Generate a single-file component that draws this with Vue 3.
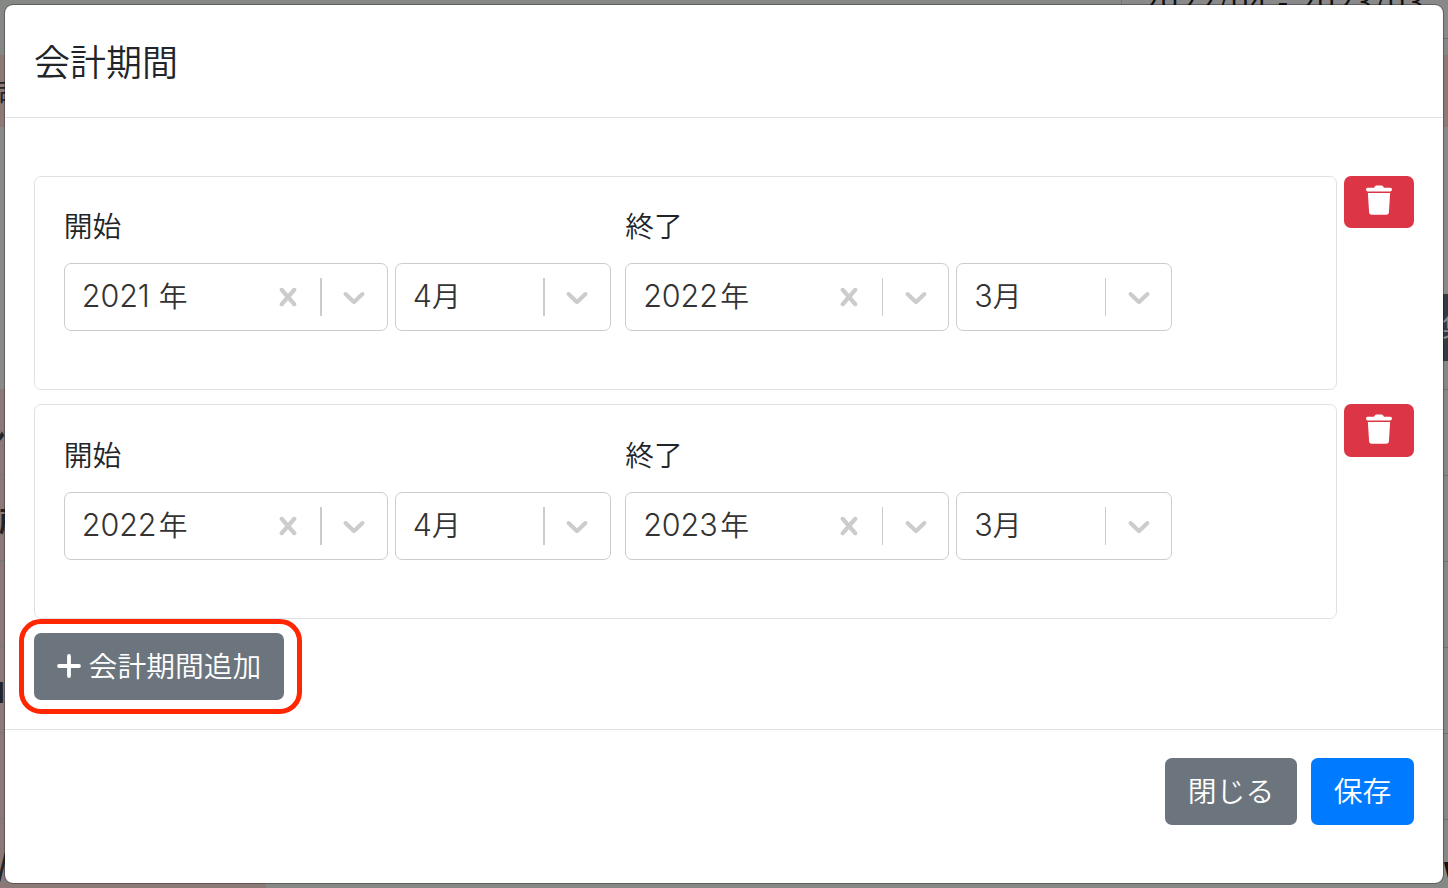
<script setup>
import { ref } from 'vue';

const periods = ref([
  {
    id: 1,
    start: { year: 2021, month: 4 },
    end: { year: 2022, month: 3 },
  },
  {
    id: 2,
    start: { year: 2022, month: 4 },
    end: { year: 2023, month: 3 },
  },
]);

const groups = [
  { key: 'start', label: '開始' },
  { key: 'end', label: '終了' },
];

function addPeriod() {
  const last = periods.value[periods.value.length - 1];
  const year = last ? last.end.year : 2021;

  periods.value.push({
    id: Date.now(),
    start: { year, month: 4 },
    end: { year: year + 1, month: 3 },
  });
}

function removePeriod(id) {
  periods.value = periods.value.filter((p) => p.id !== id);
}
</script>

<template>
  <div class="screen">
    <div class="page" aria-hidden="true">
      <div class="page-picker">2022/04 - 2023/03</div>
      <div class="page-side page-side--left">
        <div class="strip strip--top"></div>
        <div class="strip strip--head"><span class="strip-company">司</span></div>
        <div class="strip strip--blank"></div>
        <div class="strip strip--row"><span class="strip-a">ン</span></div>
        <div class="strip strip--row"><span class="strip-b">所</span></div>
        <div class="strip strip--row"></div>
        <div class="strip strip--row"><span class="strip-c">I</span></div>
        <div class="strip strip--row"></div>
        <div class="strip strip--row"><span class="strip-d">/</span></div>
      </div>
      <div class="page-side page-side--right">
        <div class="strip strip--r-top"></div>
        <div class="strip strip--r-gap"></div>
        <div class="strip strip--head"></div>
        <div class="strip strip--r-blank"></div>
        <div class="strip strip--button"><span>集</span></div>
        <div class="strip strip--r-first"></div>
        <div class="strip strip--gray"></div>
        <div class="strip strip--gray"></div>
        <div class="strip strip--gray"></div>
        <div class="strip strip--gray"></div>
        <div class="strip strip--gray"></div>
        <div class="strip strip--gray"><span class="strip-e">w</span></div>
      </div>
      <div class="page-bottom"></div>
    </div>

    <div class="modal" role="dialog" aria-modal="true">
      <header class="modal-header">
        <h5 class="modal-title">会計期間</h5>
      </header>

      <div class="modal-body">
        <div v-for="period in periods" :key="period.id" class="period">
          <div class="period-card">
            <div v-for="group in groups" :key="group.key" class="group">
              <span class="group-label">{{ group.label }}</span>
              <div class="group-selects">
                <div class="select select--year">
                  <span class="select-value"><span class="digits digits--year">{{ period[group.key].year }}</span>年</span>
                  <span class="select-indicator">
                    <svg viewBox="0 0 20 20">
                      <path d="M14.348 14.849c-0.469 0.469-1.229 0.469-1.697 0l-2.651-3.030-2.651 3.029c-0.469 0.469-1.229 0.469-1.697 0-0.469-0.469-0.469-1.229 0-1.697l2.758-3.15-2.759-3.152c-0.469-0.469-0.469-1.228 0-1.697s1.228-0.469 1.697 0l2.652 3.031 2.651-3.031c0.469-0.469 1.228-0.469 1.697 0s0.469 1.229 0 1.697l-2.758 3.152 2.758 3.15c0.469 0.469 0.469 1.229 0 1.698z" />
                    </svg>
                  </span>
                  <span class="select-separator"></span>
                  <span class="select-indicator">
                    <svg viewBox="0 0 20 20">
                      <path d="M4.516 7.548c0.436-0.446 1.043-0.481 1.576 0l3.908 3.747 3.908-3.747c0.533-0.481 1.141-0.446 1.574 0 0.436 0.445 0.408 1.197 0 1.615-0.406 0.418-4.695 4.502-4.695 4.502-0.217 0.223-0.502 0.335-0.787 0.335s-0.57-0.112-0.789-0.335c0 0-4.287-4.084-4.695-4.502s-0.436-1.17 0-1.615z" />
                    </svg>
                  </span>
                </div>
                <div class="select select--month">
                  <span class="select-value"><span class="digits">{{ period[group.key].month }}</span>月</span>
                  <span class="select-separator"></span>
                  <span class="select-indicator">
                    <svg viewBox="0 0 20 20">
                      <path d="M4.516 7.548c0.436-0.446 1.043-0.481 1.576 0l3.908 3.747 3.908-3.747c0.533-0.481 1.141-0.446 1.574 0 0.436 0.445 0.408 1.197 0 1.615-0.406 0.418-4.695 4.502-4.695 4.502-0.217 0.223-0.502 0.335-0.787 0.335s-0.57-0.112-0.789-0.335c0 0-4.287-4.084-4.695-4.502s-0.436-1.17 0-1.615z" />
                    </svg>
                  </span>
                </div>
              </div>
            </div>
          </div>
          <button
            type="button"
            class="btn btn--danger"
            aria-label="削除"
            @click="removePeriod(period.id)">
            <svg class="icon-trash" viewBox="0 0 26 30">
              <path d="M8 2.7 L9 1.2 Q9.5 0.5 10.4 0.5 H15.6 Q16.5 0.5 17 1.2 L18 2.7 H24.4 Q26 2.8 26 4.5 Q26 6.3 24.4 6.4 H1.6 Q0 6.3 0 4.5 Q0 2.8 1.6 2.7 Z" />
              <path d="M1.9 8 H24.1 L22.9 27.4 Q22.7 29.8 20.3 29.8 H5.7 Q3.3 29.8 3.1 27.4 Z" />
            </svg>
          </button>
        </div>

        <div class="add">
          <button type="button" class="btn btn--secondary btn--add" @click="addPeriod">
            <svg class="icon-plus" viewBox="0 0 24 24">
              <path d="M12 2 V22 M2 12 H22" />
            </svg>
            会計期間追加
          </button>
        </div>
      </div>

      <footer class="modal-footer">
        <button type="button" class="btn btn--secondary btn--close">閉じる</button>
        <button type="button" class="btn btn--primary">保存</button>
      </footer>
    </div>
  </div>
</template>

<style>
body {
  margin: 0;
  overflow: hidden;
}
</style>

<style scoped>
.screen {
  position: relative;
  box-sizing: border-box;
  width: 1448px;
  height: 888px;
  padding: 4px;
  overflow: hidden;
  background: #868886;
  color: #212529;
  font-family: 'Noto Sans CJK JP', sans-serif;
  font-size: 28.8px;
  font-weight: 350;
}

.screen * {
  box-sizing: border-box;
}

/* dimmed page behind the dialog */
.page {
  position: absolute;
  inset: 0;
  display: flex;
  justify-content: space-between;
}

.page-picker {
  position: absolute;
  top: -30px;
  left: 1121px;
  width: 327px;
  height: 69px;
  padding-left: 20px;
  border: 1px solid #777;
  background: #898989;
  color: #111;
  font-size: 31px;
  letter-spacing: 1.8px;
  line-height: 57px;
  white-space: nowrap;
}

.page-side {
  position: relative;
  width: 6px;
  overflow: hidden;
}

.page-bottom {
  position: absolute;
  bottom: 0;
  left: 0;
  width: 266px;
  height: 6px;
  background: #8b7977;
}

.strip {
  position: relative;
  overflow: hidden;
}

.strip span {
  position: absolute;
  line-height: 30px;
}

.strip--top {
  height: 55px;
}

.strip--head {
  height: 72px;
  background: #8d7a77;
}

.strip--blank {
  height: 262px;
  background: #898989;
}

.strip--row {
  height: 86px;
  border-bottom: 1px solid #767a7c;
  background: #8b7977;
  font-weight: 700;
}

.page-side--left .strip--row:last-child {
  height: 100px;
  border-bottom: 0;
}

.strip .strip-company {
  top: 22px;
  left: -4px;
}

.strip .strip-a {
  top: 33px;
  left: -23px;
}

.strip .strip-b {
  top: 30px;
  left: -1px;
}

.strip .strip-c {
  top: 29px;
  left: -4px;
}

.strip .strip-d {
  top: 30px;
  left: -3px;
}

.strip--r-top {
  height: 39px;
  border-bottom: 1px solid #6d6d6d;
  background: #898989;
}

.strip--r-gap {
  height: 16px;
}

.strip--r-blank {
  height: 167px;
  background: #898989;
}

.strip--button {
  height: 67px;
  background: #343a3f;
  color: #8c8c8c;
}

.strip--button span {
  top: 16px;
  left: 0;
}

.strip--r-first {
  height: 29px;
  border-bottom: 1px solid #717473;
}

.strip--gray {
  height: 86px;
  border-bottom: 1px solid #717473;
}

.strip .strip-e {
  top: 31px;
  left: 1px;
  color: #111;
  font-weight: 700;
}

/* dialog */
.modal {
  position: relative;
  display: flex;
  flex-direction: column;
  height: 880px;
  border: 1px solid rgba(0, 0, 0, 0.3);
  border-radius: 9px;
  background: #fff;
  background-clip: padding-box;
}

.modal-header {
  height: 113px;
  padding: 28px 29px;
  border-bottom: 1px solid #dee2e6;
}

.modal-title {
  margin: 0;
  font-size: 36px;
  font-weight: 350;
  line-height: 54px;
}

.modal-body {
  display: flex;
  flex-direction: column;
  gap: 14.4px;
  height: 611px;
  padding: 57.8px 29px 0;
}

.period {
  display: flex;
  align-items: flex-start;
  gap: 7px;
}

.period-card {
  display: flex;
  gap: 14.4px;
  width: 1303px;
  height: 214.2px;
  padding: 28.6px 28.8px;
  border: 1px solid #dee2e6;
  border-radius: 7px;
}

.group-label {
  display: block;
  height: 58px;
  line-height: 40px;
}

.group-selects {
  display: flex;
  gap: 7px;
}

.select {
  display: flex;
  align-items: center;
  height: 68px;
  padding-left: 17px;
  border: 1px solid #ccc;
  border-radius: 7px;
  color: #333;
}

.select--year {
  width: 324px;
}

.select--month {
  width: 216px;
}

.select-value {
  flex: 1;
  padding-bottom: 3px;
  line-height: 44px;
}

.digits {
  font-family: Inter, 'Noto Sans CJK JP', sans-serif;
  font-size: 30.5px;
  font-weight: 300;
}

/* keeps 年 in one place whatever the width of the digits */
.digits--year {
  display: inline-block;
  width: 77px;
  letter-spacing: -0.1px;
}

.select-indicator {
  display: flex;
  padding: 0 14.4px;
}

.select-indicator svg {
  width: 36px;
  height: 36px;
  fill: #ccc;
}

.select-separator {
  width: 1.8px;
  height: 38px;
  background: #ccc;
}

.btn {
  display: flex;
  align-items: center;
  justify-content: center;
  height: 67px;
  padding: 0 0 3px;
  border: 0;
  border-radius: 7px;
  color: #fff;
  cursor: pointer;
  font: inherit;
  white-space: nowrap;
}

.btn--danger {
  width: 70px;
  height: 52.4px;
  background: #dc3545;
}

.btn--secondary {
  background: #6c757d;
}

.btn--primary {
  width: 103px;
  background: #007bff;
}

.btn--close {
  width: 132px;
}

.modal-footer .btn {
  padding-bottom: 4px;
}

.btn--add {
  width: 250px;
}

.icon-trash {
  width: 26px;
  height: 30px;
  fill: #fff;
}

.icon-plus {
  width: 24px;
  height: 24px;
  margin: 3px 8px 0 0;
  fill: none;
  stroke: #fff;
  stroke-linecap: round;
  stroke-width: 3.8;
}

.add {
  position: relative;
  align-self: flex-start;
}

/* marker around the add button */
.add::after {
  content: '';
  position: absolute;
  inset: -14px -18px -14px -15px;
  border: 5px solid #ff2600;
  border-radius: 22px;
  pointer-events: none;
}

.modal-footer {
  display: flex;
  justify-content: flex-end;
  gap: 14px;
  padding: 28px 29px;
  border-top: 1px solid #dee2e6;
}
</style>
